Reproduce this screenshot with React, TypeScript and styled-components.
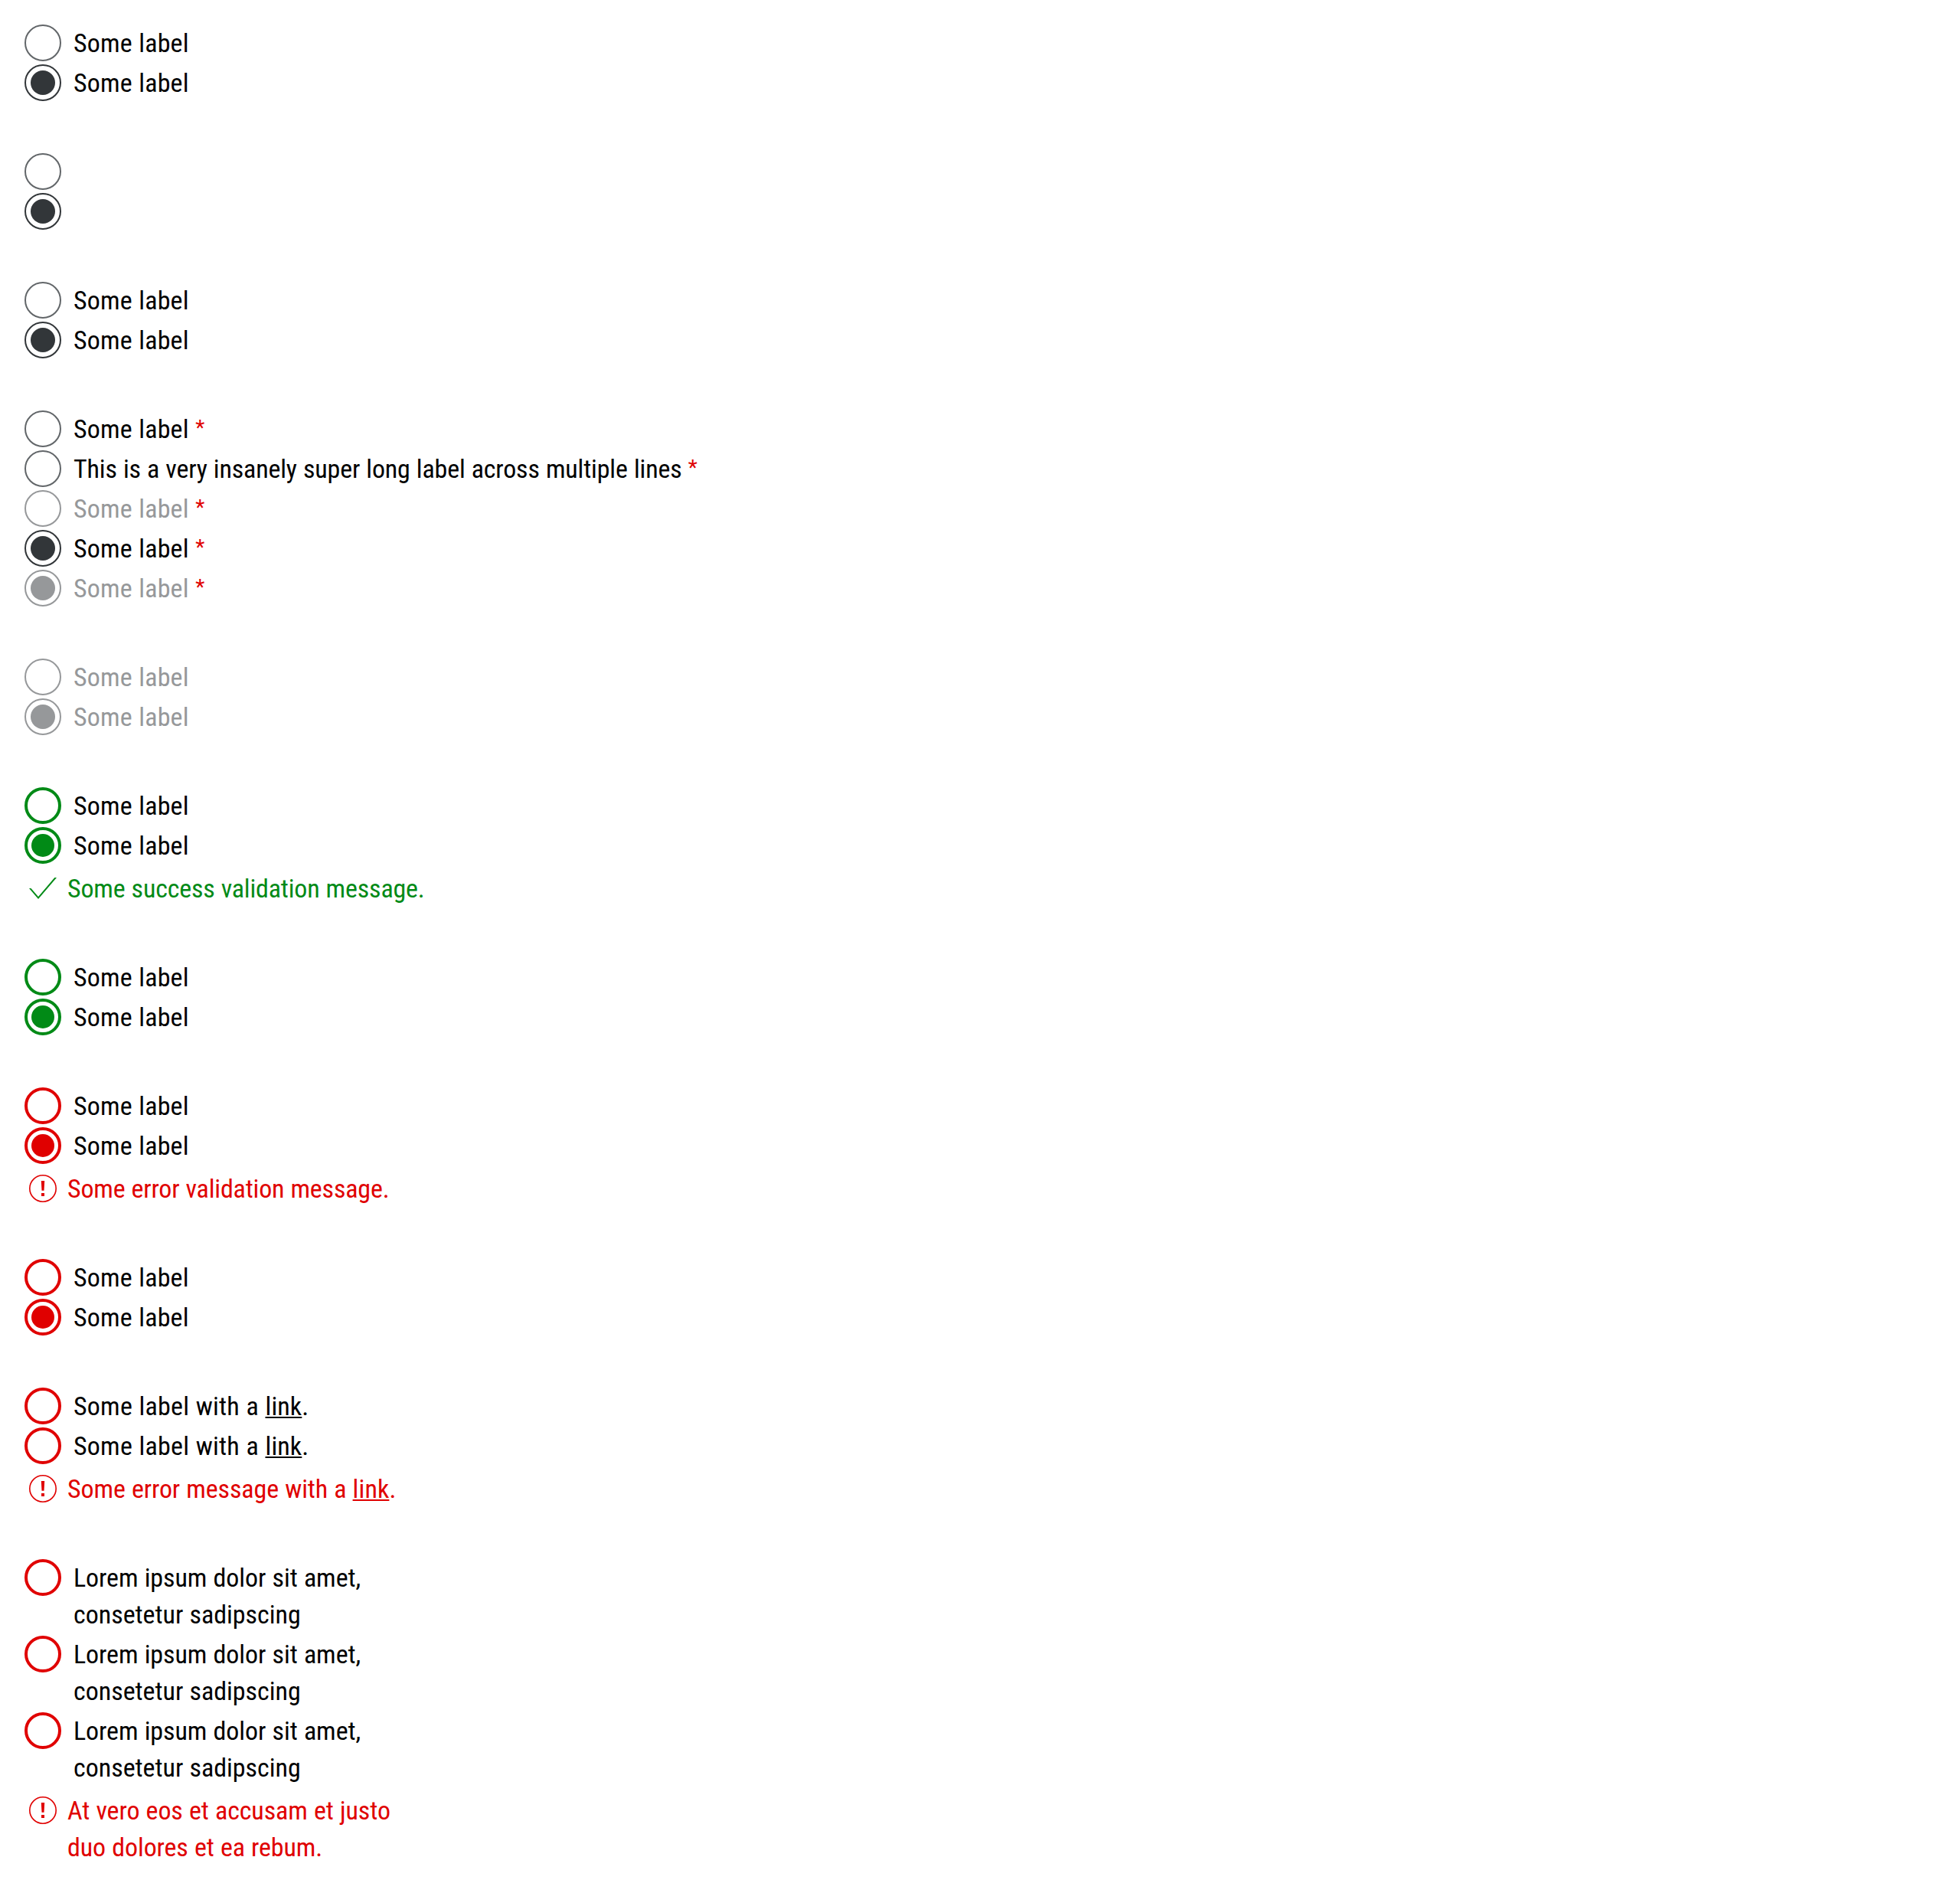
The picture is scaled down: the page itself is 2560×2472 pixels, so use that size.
import React from "react";
import styled, { createGlobalStyle } from "styled-components";

type State = "none" | "success" | "error";

const palette = {
  text: "#000000",
  high: "#323639",
  medium: "#626669",
  disabled: "#96989a",
  success: "#018a16",
  error: "#e00000",
};

const GlobalStyle = createGlobalStyle`
  body {
    margin: 0;
    background: #ffffff;
  }
`;

const Page = styled.main`
  display: flex;
  flex-direction: column;
  gap: 68px;
  padding: 32px;
  color: ${palette.text};
  font-family: "Roboto Condensed", Roboto, "Liberation Sans", sans-serif;
  font-size: 34px;
  line-height: 48px;
`;

const Group = styled.section`
  display: flex;
  flex-direction: column;
  gap: 4px;
`;

const Option = styled.label`
  display: flex;
  align-items: flex-start;
  gap: 16px;
`;

const ringColor = (state: State, checked?: boolean, disabled?: boolean) => {
  if (disabled) return palette.disabled;
  if (state !== "none") return palette[state];
  return checked ? palette.high : palette.medium;
};

const Radio = styled.input<{ $state: State }>`
  appearance: none;
  box-sizing: border-box;
  flex: none;
  width: 48px;
  height: 48px;
  margin: 0;
  padding: ${(p) => (p.$state === "none" ? 6 : 5)}px;
  border: ${(p) => (p.$state === "none" ? 2 : 4)}px solid
    ${(p) => ringColor(p.$state, p.checked, p.disabled)};
  border-radius: 50%;
  background: #ffffff;

  &:checked::before {
    content: "";
    display: block;
    width: 100%;
    height: 100%;
    border-radius: 50%;
    background: ${(p) => ringColor(p.$state, true, p.disabled)};
  }
`;

const Text = styled.span<{ $tracking: number; $disabled?: boolean }>`
  color: ${(p) => (p.$disabled ? palette.disabled : "inherit")};
  letter-spacing: ${(p) => p.$tracking}px;
  word-spacing: 0.5px;
`;

const Line = styled.span<{ $tracking: number }>`
  display: block;
  letter-spacing: ${(p) => p.$tracking}px;
`;

const Required = styled.span`
  margin-left: 1.5px;
  color: ${palette.error};
  font-size: 28px;
  line-height: 1;
  vertical-align: 4px;
`;

const Link = styled.a`
  color: inherit;
  letter-spacing: 0.1px;
  text-decoration: underline;
  text-decoration-thickness: 2px;
  text-decoration-skip-ink: none;
  text-underline-offset: 2px;
`;

const Message = styled.div<{ $state: "success" | "error" }>`
  display: flex;
  align-items: flex-start;
  gap: 8px;
  margin-top: 4px;
  color: ${(p) => palette[p.$state]};
`;

const Icon = styled.svg`
  flex: none;
  width: 48px;
  height: 48px;
  fill: currentColor;
`;

const CheckIcon = () => (
  <Icon viewBox="0 0 48 48" aria-hidden="true">
    <path d="M6 24h2.5L18 35 39.3 10H42L18 37.9z" />
  </Icon>
);

const ErrorIcon = () => (
  <Icon viewBox="0 0 48 48" aria-hidden="true">
    <circle cx="24" cy="24" r="17.2" fill="none" stroke="currentColor" strokeWidth="1.6" />
    <path d="M21.8 14h4.4l-.7 12.7h-3zM22 30h4v4h-4z" />
  </Icon>
);

interface ItemProps {
  children?: React.ReactNode;
  checked?: boolean;
  disabled?: boolean;
  required?: boolean;
  state?: State;
  tracking?: number;
}

const Item = ({ children, checked, disabled, required, state = "none", tracking = 0.15 }: ItemProps) => (
  <Option>
    <Radio type="radio" readOnly checked={!!checked} disabled={disabled} $state={state} />
    {children && (
      <Text $tracking={tracking} $disabled={disabled}>
        {children}
        {required && <Required> *</Required>}
      </Text>
    )}
  </Option>
);

const Pair = ({ state, disabled }: { state?: State; disabled?: boolean }) => (
  <>
    <Item state={state} disabled={disabled}>Some label</Item>
    <Item state={state} disabled={disabled} checked>Some label</Item>
  </>
);

const LinkLabel = () => (
  <Item state="error" tracking={0.21}>
    Some label with a <Link>link</Link>.
  </Item>
);

const LongLabel = () => (
  <Item state="error">
    <Line $tracking={-0.08}>Lorem ipsum dolor sit amet,</Line>
    <Line $tracking={-0.03}>consetetur sadipscing</Line>
  </Item>
);

export default function App() {
  return (
    <>
      <GlobalStyle />
      <Page>
        <Group>
          <Pair />
        </Group>
        <Group>
          <Item />
          <Item checked />
        </Group>
        <Group>
          <Pair />
        </Group>
        <Group>
          <Item required>Some label</Item>
          <Item required tracking={-0.17}>
            This is a very insanely super long label across multiple lines
          </Item>
          <Item required disabled>Some label</Item>
          <Item required checked>Some label</Item>
          <Item required checked disabled>Some label</Item>
        </Group>
        <Group>
          <Pair disabled />
        </Group>
        <Group>
          <Pair state="success" />
          <Message $state="success">
            <CheckIcon />
            <Text $tracking={-0.19}>Some success validation message.</Text>
          </Message>
        </Group>
        <Group>
          <Pair state="success" />
        </Group>
        <Group>
          <Pair state="error" />
          <Message $state="error">
            <ErrorIcon />
            <Text $tracking={-0.19}>Some error validation message.</Text>
          </Message>
        </Group>
        <Group>
          <Pair state="error" />
        </Group>
        <Group>
          <LinkLabel />
          <LinkLabel />
          <Message $state="error">
            <ErrorIcon />
            <Text $tracking={-0.12}>
              Some error message with a <Link>link</Link>.
            </Text>
          </Message>
        </Group>
        <Group>
          <LongLabel />
          <LongLabel />
          <LongLabel />
          <Message $state="error">
            <ErrorIcon />
            <Text $tracking={0}>
              <Line $tracking={-0.1}>At vero eos et accusam et justo</Line>
              <Line $tracking={-0.11}>duo dolores et ea rebum.</Line>
            </Text>
          </Message>
        </Group>
      </Page>
    </>
  );
}
